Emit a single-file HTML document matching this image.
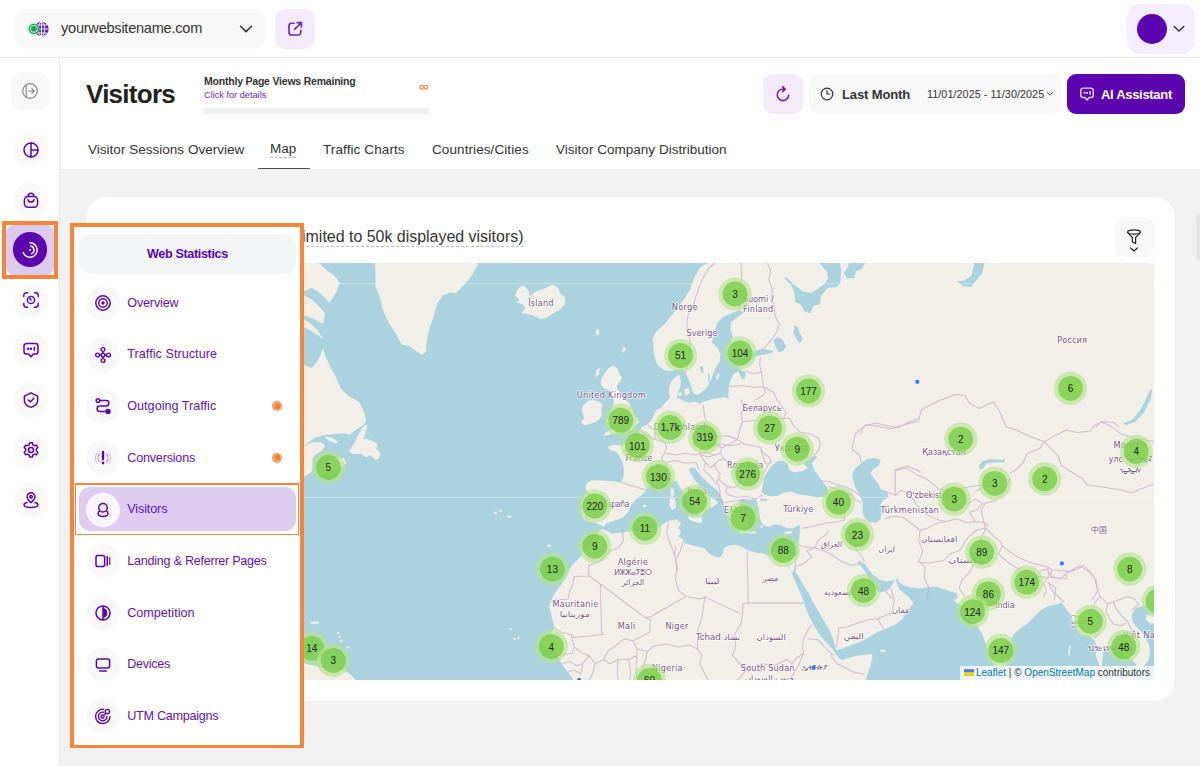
<!DOCTYPE html>
<html lang="en">
<head>
<meta charset="utf-8">
<title>Visitors - Map</title>
<style>
*{box-sizing:border-box;margin:0;padding:0}
html,body{width:1200px;height:766px;overflow:hidden;background:#fff}
body{font-family:"Liberation Sans",sans-serif;color:#222;position:relative}
.t{position:absolute;white-space:nowrap;line-height:1}
.topbar{position:absolute;left:0;top:0;width:1200px;height:58px;background:#fff;border-bottom:1px solid #e8e8e8}
.site{position:absolute;left:15px;top:9px;width:250px;height:40px;border-radius:11px;background:#f8f8f8}
.ext{position:absolute;left:275px;top:9px;width:40px;height:40px;border-radius:11px;background:#f3ebfc}
.user{position:absolute;left:1127px;top:4px;width:68px;height:50px;border-radius:13px;background:#f4eefc}
.user .av{position:absolute;left:9.6px;top:10px;width:30px;height:30px;border-radius:50%;background:#5b04b0}
.side{position:absolute;left:0;top:58px;width:60px;height:708px;background:#fff;border-right:1px solid #e8e8e8}
.sq{position:absolute;left:11px;top:14px;width:38px;height:38px;border-radius:11px;background:#f8f8f8}
.sb{position:absolute;left:13px;width:35px;height:35px;border-radius:50%;background:#f9f9f9}
.sb svg,.sq svg,.mi svg{position:absolute;left:50%;top:50%;transform:translate(-50%,-50%)}
.sel{position:absolute;left:2px;top:163.1px;width:55.9px;height:57.6px;background:#f8843a}
.sel .w{position:absolute;left:3.9px;top:3.9px;right:3.9px;bottom:3.9px;background:#fff}
.sel .in{position:absolute;left:4.4px;top:4.2px;width:47.5px;height:49.6px;border-radius:8px;background:#dccbf0}
.sel .dot{position:absolute;left:10.6px;top:11.3px;width:34.9px;height:34.9px;border-radius:50%;background:#5b04b0}
.main{position:absolute;left:60px;top:58px;width:1140px;height:708px;background:#f2f2f2}
.head{position:absolute;left:0;top:0;width:1140px;height:112px;background:#fff;border-bottom:1px solid #ebebeb}
.bar{position:absolute;left:144px;top:49.6px;width:225px;height:6.4px;background:#efefef}
.btn{position:absolute;top:16px;height:40px;border-radius:10px}
.card{position:absolute;left:26px;top:138.7px;width:1088.7px;height:504px;background:#fff;border-radius:21px;box-shadow:0 0 0 .5px #ededed}
.filt{position:absolute;left:1028.6px;top:20.5px;width:40px;height:40px;border-radius:10px;background:#f8f8f8}
.map{position:absolute;left:20px;top:66.3px;width:1048px;height:417px;overflow:hidden;background:#aad3df}
.pop{position:absolute;left:70.2px;top:223.2px;width:233.6px;height:525.1px;background:#f8843a}
.popin{position:absolute;left:3.7px;top:3.7px;right:3.7px;bottom:3.7px;background:#fff}
.pill{position:absolute;left:5.1px;top:6.9px;width:217px;height:40px;border-radius:11px;background:#f4f5f7}
.mi{position:absolute;left:12px;width:34px;height:34px;border-radius:50%;background:#f8f8f8}
.ml{position:absolute;left:53.4px;font-size:12.6px;color:#5f12b5;white-space:nowrap;line-height:1}
.act{position:absolute;left:1.2px;top:256.5px;width:224px;height:51.5px;background:#f8843a}
.act .wi{position:absolute;left:1.3px;top:1.3px;right:1.3px;bottom:1.3px;background:#fff}
.act .bg{position:absolute;left:3.9px;top:3.7px;width:217px;height:44.4px;border-radius:11px;background:#decdf0}
.od{position:absolute;left:198.6px;width:10px;height:10px;border-radius:50%;background:#f7a15e}
.od:after{content:"";position:absolute;left:2.5px;top:2.5px;width:5px;height:5px;border-radius:50%;background:#f07d28}
</style>
</head>
<body>
<div class="topbar">
  <div class="site">
    <svg style="position:absolute;left:12px;top:10px" width="24" height="20" viewBox="0 0 24 20">
      <circle cx="14.5" cy="10" r="7.2" fill="#6a1fc0"/>
      <g fill="none" stroke="#fff" stroke-width=".9"><ellipse cx="14.5" cy="10" rx="3.2" ry="7"/><path d="M7.5 10h14M9 6h11M9 14h11M14.5 3v14"/></g>
      <circle cx="6.9" cy="9.900" r="7" fill="#3ec77a" opacity=".22"/>
      <circle cx="6.9" cy="9.900" r="5.200" fill="#18a558"/>
      <circle cx="6.9" cy="9.900" r="3.500" fill="none" stroke="#fff" stroke-width=".9" opacity=".9"/>
    </svg>
    <span class="t" id="t_site" style="left:46px;top:12px;font-size:14.6px;color:#333;letter-spacing:-0.26px">yourwebsitename.com</span>
    <svg style="position:absolute;left:224px;top:15px" width="14" height="10" viewBox="0 0 14 10"><path d="M1.5 2.2L7 7.6l5.5-5.4" fill="none" stroke="#333" stroke-width="1.5" stroke-linecap="round" stroke-linejoin="round"/></svg>
  </div>
  <div class="ext">
    <svg style="position:absolute;left:12px;top:12px" width="16" height="16" viewBox="0 0 16 16" fill="none" stroke="#6a1fc0" stroke-width="1.6" stroke-linecap="round" stroke-linejoin="round"><path d="M7 2.2H4.6A2.6 2.6 0 0 0 2 4.8v6.6A2.6 2.6 0 0 0 4.6 14h6.6a2.6 2.6 0 0 0 2.6-2.6V9.2"/><path d="M10 1.6h4.4V6M14 2L7.6 8.4"/></svg>
  </div>
  <div class="user"><div class="av"></div>
    <svg style="position:absolute;left:46px;top:21px" width="12" height="8" viewBox="0 0 12 8"><path d="M1.2 1.4L6 6l4.8-4.6" fill="none" stroke="#333" stroke-width="1.4" stroke-linecap="round" stroke-linejoin="round"/></svg>
  </div>
</div>
<div class="side">
  <div class="sq"><svg width="18" height="18" viewBox="0 0 18 18" fill="none" stroke="#8a8a8a" stroke-width="1.2" stroke-linecap="round" stroke-linejoin="round"><circle cx="9" cy="9" r="7.3"/><path d="M5.2 2.8v12.4M7.6 9h5.6M10.8 6.6L13.3 9l-2.5 2.4"/></svg></div>
  <div class="sb" style="top:74px"><svg width="18" height="18" viewBox="0 0 18 18" fill="none" stroke="#5b04b0" stroke-width="1.5" stroke-linecap="round"><circle cx="9" cy="9" r="7"/><path d="M9 2v14M9 9h7"/></svg></div>
  <div class="sb" style="top:124.5px"><svg width="18" height="18" viewBox="0 0 18 18" fill="none" stroke="#5b04b0" stroke-width="1.5" stroke-linecap="round" stroke-linejoin="round"><rect x="2.400" y="5.600" width="13.200" height="10.600" rx="3.600"/><path d="M6.200 5.400V5a2.800 2.800 0 0 1 5.600 0v.4M6 8.800a3.100 3.100 0 0 0 6 0"/></svg></div>
  <div class="sel"><div class="w"></div><div class="in"></div><div class="dot"><svg style="position:absolute;left:8.500px;top:8.500px" width="18" height="18" viewBox="0 0 18 18" fill="none" stroke="#fff" stroke-width="1.5" stroke-linecap="round"><path d="M9 1.800a7.200 7.200 0 1 1-6.800 9.600"/><path d="M9.600 5a4 4 0 0 1 1 7.600"/><circle cx="9" cy="9" r="1" fill="#fff" stroke="none"/></svg></div></div>
  <div class="sb" style="top:224.500px"><svg width="18" height="18" viewBox="0 0 18 18" fill="none" stroke="#5b04b0" stroke-width="1.500" stroke-linecap="round"><path d="M1.800 5.600V4.400a2.600 2.600 0 0 1 2.600-2.600h1.200M12.400 1.800h1.200a2.600 2.600 0 0 1 2.600 2.600v1.200M16.200 12.400v1.200a2.600 2.600 0 0 1-2.600 2.600h-1.200M5.600 16.200H4.400a2.600 2.600 0 0 1-2.600-2.600v-1.200"/><circle cx="9" cy="9" r="3.600"/><path d="M9 9L7.800 7.600"/></svg></div>
  <div class="sb" style="top:274px"><svg width="18" height="18" viewBox="0 0 18 18" fill="none" stroke="#5b04b0" stroke-width="1.500" stroke-linecap="round" stroke-linejoin="round"><path d="M4.600 2.400h8.800a2.600 2.600 0 0 1 2.600 2.600v5.400a2.600 2.600 0 0 1-2.600 2.600h-2l-2.400 2.800L6.600 13h-2a2.600 2.600 0 0 1-2.600-2.600V5a2.600 2.600 0 0 1 2.600-2.600z"/><path d="M12.400 6.200v3" /><circle cx="6.200" cy="7.700" r=".5" fill="#5b04b0"/><circle cx="9" cy="7.700" r=".5" fill="#5b04b0"/></svg></div>
  <div class="sb" style="top:324.500px"><svg width="18" height="18" viewBox="0 0 18 18" fill="none" stroke="#5b04b0" stroke-width="1.500" stroke-linecap="round" stroke-linejoin="round"><path d="M9 1.800l6.600 3.400v4.200c0 3.200-2.600 5.600-6.600 7-4-1.400-6.600-3.800-6.600-7V5.200z" transform="rotate(0 9 9)"/><path d="M6.400 9l1.900 1.900 3.500-3.600"/></svg></div>
  <div class="sb" style="top:374.500px"><svg width="18" height="18" viewBox="0 0 18 18" fill="none" stroke="#5b04b0" stroke-width="1.500" stroke-linejoin="round"><circle cx="9" cy="9" r="2.500"/><path d="M7.600 1.800h2.800l.5 2 1.500.9 2-.6 1.400 2.400-1.500 1.500v1.800l1.500 1.500-1.400 2.400-2-.6-1.500.9-.5 2H7.600l-.5-2-1.500-.9-2 .6-1.400-2.400 1.500-1.500V8l-1.500-1.500 1.400-2.400 2 .6 1.500-.9z"/></svg></div>
  <div class="sb" style="top:424.500px"><svg width="18" height="18" viewBox="0 0 18 18" fill="none" stroke="#5b04b0" stroke-width="1.500" stroke-linecap="round" stroke-linejoin="round"><path d="M9 11.800c2.600-2.400 3.900-4.300 3.900-6A3.900 3.900 0 0 0 9 1.800a3.900 3.900 0 0 0-3.900 4c0 1.700 1.300 3.600 3.900 6z"/><circle cx="9" cy="5.800" r="1.300"/><path d="M5 11.600c-1.900.5-3 1.300-3 2.200 0 1.500 3.100 2.600 7 2.600s7-1.100 7-2.600c0-.9-1.100-1.700-3-2.200"/></svg></div>
</div>
<div class="main">
  <div class="head">
    <span class="t" id="t_h1" style="left:26px;top:22.8px;font-size:26px;font-weight:700;color:#222;letter-spacing:-0.74px">Visitors</span>
    <span class="t" id="t_mpv" style="left:144px;top:17.6px;font-size:10.5px;font-weight:700;color:#333;letter-spacing:-0.21px">Monthly Page Views Remaining</span>
    <span class="t" id="t_cfd" style="left:144px;top:32.6px;font-size:9.2px;color:#6a1fc0">Click for details</span>
    <span class="t" style="left:359px;top:22.4px;font-size:13.5px;font-weight:700;color:#f08a3c">∞</span>
    <div class="bar"></div>
    <div class="btn" style="left:703px;width:40px;background:#f3ebfc"><svg style="position:absolute;left:11px;top:11px" width="18" height="18" viewBox="0 0 18 18" fill="none" stroke="#6a1fc0" stroke-width="1.600" stroke-linecap="round" stroke-linejoin="round"><path d="M14.600 10.200A5.700 5.700 0 1 1 9 4.200h1.600"/><path d="M8.600 1.600l2.600 2.600-2.600 2.600" fill="#6a1fc0"/></svg></div>
    <div class="btn" style="left:749px;width:252px;background:#f8f8f8">
      <svg style="position:absolute;left:11px;top:13px" width="14" height="14" viewBox="0 0 14 14" fill="none" stroke="#333" stroke-width="1.200" stroke-linecap="round" stroke-linejoin="round"><circle cx="7" cy="7" r="5.800"/><path d="M7 3.600V7h2.600"/></svg>
      <span class="t" id="t_lm" style="left:33px;top:13.500px;font-size:13px;font-weight:700;color:#333;letter-spacing:-0.13px">Last Month</span>
      <span class="t" id="t_date" style="left:118px;top:15px;font-size:10.800px;color:#333;letter-spacing:0.05px">11/01/2025 - 11/30/2025</span>
      <svg style="position:absolute;left:237px;top:17px" width="8" height="6" viewBox="0 0 8 6"><path d="M1 1.200l3 3 3-3" fill="none" stroke="#444" stroke-width="1" stroke-linecap="round" stroke-linejoin="round"/></svg>
    </div>
    <div class="btn" style="left:1007px;width:118px;background:#5b04b0;border-radius:9px">
      <svg style="position:absolute;left:12px;top:12px" width="16" height="16" viewBox="0 0 18 18" fill="none" stroke="#e9d9fb" stroke-width="1.600" stroke-linecap="round" stroke-linejoin="round"><path d="M4.600 2.400h8.800a2.600 2.600 0 0 1 2.600 2.600v5.400a2.600 2.600 0 0 1-2.600 2.600h-2l-2.400 2.800L6.600 13h-2a2.600 2.600 0 0 1-2.600-2.600V5a2.600 2.600 0 0 1 2.600-2.600z"/><path d="M12.400 6.200v3"/><circle cx="6.200" cy="7.700" r=".5" fill="#e9d9fb"/><circle cx="9" cy="7.700" r=".5" fill="#e9d9fb"/></svg>
      <span class="t" id="t_ai" style="left:34px;top:13.500px;font-size:13px;font-weight:700;color:#fff;letter-spacing:-0.31px">AI Assistant</span>
    </div>
    <span class="t" id="t_tab1" style="left:28px;top:84.6px;font-size:13.55px;color:#333;letter-spacing:0">Visitor Sessions Overview</span>
    <span class="t" id="t_tab2" style="left:210px;top:83.6px;font-size:13.55px;color:#333;padding-bottom:2px;border-bottom:1px dashed #bbb;letter-spacing:0">Map</span>
    <div style="position:absolute;left:198px;top:110.3px;width:52px;height:1.2px;background:#4a4a4a"></div>
    <span class="t" id="t_tab3" style="left:263px;top:84.6px;font-size:13.55px;color:#333;letter-spacing:0.08px">Traffic Charts</span>
    <span class="t" id="t_tab4" style="left:372px;top:84.6px;font-size:13.55px;color:#333;letter-spacing:0.07px">Countries/Cities</span>
    <span class="t" id="t_tab5" style="left:496px;top:84.6px;font-size:13.55px;color:#333;letter-spacing:0">Visitor Company Distribution</span>
  </div>
  <div class="card">
    <span class="t" id="t_ct" style="right:651.2px;top:32px;font-size:15.95px;color:#333;padding-bottom:1.8px;border-bottom:1px dashed #bbb">Visitors Map (limited to 50k displayed visitors)</span>
    <div class="filt"><svg style="position:absolute;left:10.2px;top:9.4px" width="18" height="26" viewBox="0 0 18 26" fill="none" stroke="#222" stroke-width="1.200" stroke-linecap="round" stroke-linejoin="round"><ellipse cx="9" cy="5" rx="6.400" ry="2.200"/><path d="M2.600 5.400L7.400 10.600V15l3.200 1.400V10.600l4.800-5.200"/><path d="M5.600 21l3.400 3 3.400-3"/></svg></div>
    <div class="map"><svg width="1048" height="417" viewBox="106 263 1048 417" style="position:absolute;left:0;top:0;display:block">
<rect x="106" y="263" width="1048" height="417" fill="#aad3df"/>
<path fill="#f2efe9" stroke="#f2efe9" stroke-width=".6" stroke-linejoin="round" d="M375.2,261.8 376.1,287.5 380.7,298.5 383.4,310.4 388.0,320.5 395.3,332.4 401.8,344.3 410.0,346.2 417.3,351.7 421.9,354.4 425.6,351.7 426.5,340.7 429.3,327.8 433.8,315.0 436.6,304.0 442.1,295.8 450.3,292.1 455.8,293.0 461.3,287.5 469.6,278.3 476.9,265.5 478.8,261.8Z M245.0,261.8 317.4,261.8 323.8,268.3 333.9,275.6 339.4,282.4 335.8,293.0 329.3,302.5 324.8,297.6 318.3,291.2 311.9,287.5 306.4,290.3 245.0,293.0Z M245.0,295.8 304.0,295.8 311.0,299.4 318.3,305.8 324.8,313.2 322.9,323.3 320.2,322.3 312.8,318.3 304.0,315.0 245.0,315.0Z M245.0,319.6 304.0,319.6 311.0,324.2 317.4,330.6 322.0,337.9 318.3,335.2 311.0,330.6 304.0,326.9 245.0,326.9Z M245.0,365.4 304.0,365.4 311.9,368.2 319.3,359.0 322.9,348.9 325.7,357.2 330.3,367.3 336.7,379.2 340.3,388.3 347.7,395.7 355.0,400.1 358.7,401.8 363.3,411.0 366.0,420.2 363.3,424.8 355.0,430.3 349.5,434.8 344.0,433.0 333.0,433.9 323.8,434.8 314.7,437.6 307.3,443.1 304.0,445.8 245.0,445.8Z M365.1,424.8 360.5,431.2 355.0,442.2 349.5,451.3 353.2,454.1 360.5,453.2 366.0,456.8 370.6,455.0 375.2,459.6 378.8,458.7 379.8,453.2 376.1,448.6 377.0,444.0 372.4,441.3 367.8,439.4 363.3,439.4 366.0,430.3 366.9,425.7Z M324.8,436.7 331.2,437.6 337.6,441.8 335.8,443.1 329.3,440.7Z M245.0,446.8 304.0,446.8 311.0,443.1 320.2,442.2 324.8,445.5 322.0,450.4 315.6,454.1 311.9,458.7 312.8,466.0 311.0,472.4 304.0,476.1 245.0,476.1Z M327.5,460.5 336.7,457.8 344.0,458.7 345.8,463.3 343.1,466.0 334.8,469.7 325.7,473.3 322.0,472.4 327.5,466.0Z M241.2,661.5 304.3,663.4 319.6,667.3 345.1,671.3 350.9,675.2 356.8,681.1 241.2,681.1Z M311.4,621.9 318.6,621.9 318.6,623.8 311.4,623.8Z M520.0,287.5 523.7,285.7 528.3,290.3 529.2,296.7 531.0,295.8 536.5,291.2 543.8,289.3 552.1,284.8 557.6,287.5 559.4,293.0 564.9,297.6 564.9,304.0 559.4,309.5 553.0,313.2 545.7,317.8 540.2,318.7 532.8,315.0 525.5,313.2 521.8,313.2 525.5,308.6 522.8,304.0 517.2,302.2 520.0,299.4 515.4,295.8 517.2,290.3Z M596.1,330.6 598.8,329.7 598.5,335.2 596.1,334.3Z M613.8,365.9 617.4,368.7 618.8,373.8 621.7,377.3 619.6,381.7 616.0,386.0 617.4,389.6 622.4,395.3 625.3,400.3 628.9,403.2 631.0,407.5 633.2,411.8 634.6,416.1 637.5,418.3 638.2,422.6 635.4,426.2 631.8,429.8 624.6,431.9 617.4,432.6 611.7,433.4 603.8,435.9 605.9,432.6 611.7,429.8 613.1,426.2 608.8,424.7 606.6,420.4 609.5,416.1 611.7,411.8 613.1,407.5 614.5,401.8 613.1,397.5 608.8,389.6 605.9,388.8 603.0,387.4 600.9,383.1 602.3,377.3 605.2,373.0 608.8,368.0Z M583.6,405.4 588.7,401.0 593.7,400.3 598.7,401.8 602.3,404.6 600.9,410.4 601.6,414.7 599.4,419.0 595.1,421.9 588.7,424.0 583.6,424.7 581.5,421.9 584.4,418.3 582.9,413.2 582.2,408.9Z M596.6,370.9 599.4,368.0 598.7,374.5 595.9,377.3Z M623.9,346.5 625.6,349.3 623.4,352.6 622.4,350.1Z M684.9,389.6 688.5,388.1 689.5,393.1 685.2,395.7Z M678.4,392.9 681.3,392.4 680.9,396.0 678.4,395.7Z M718.2,373.3 719.4,375.2 717.2,379.9 716.2,377.6Z M671.4,488.4 673.6,489.2 673.6,496.0 671.6,496.8 670.5,492.6Z M670.2,498.5 674.8,497.7 675.6,507.9 672.2,509.6 669.7,506.2Z M688.4,516.3 699.4,517.2 701.9,519.7 700.2,523.1 694.3,521.4 689.2,518.9Z M643.2,504.9 646.1,505.2 645.8,507.1 643.2,506.7Z M784.2,532.5 791.8,531.3 791.3,533.3 785.2,533.8Z M739.3,531.6 755.4,531.6 755.4,533.3 739.3,533.3Z M760.5,525.9 762.5,525.9 762.5,527.2 760.5,527.2Z M709.8,261.8 700.6,267.3 695.1,276.5 690.5,289.3 685.0,298.5 679.5,305.8 672.2,315.0 664.8,324.2 656.6,331.5 652.9,338.8 653.8,348.0 654.8,357.2 657.5,364.5 664.8,370.0 672.2,370.6 679.5,369.1 683.5,368.7 684.9,370.9 687.8,377.3 690.6,383.1 692.1,388.8 693.5,393.1 697.8,394.6 702.1,391.7 706.4,387.4 710.0,381.7 712.2,375.9 715.1,368.7 719.4,361.5 720.1,354.4 717.9,348.6 713.6,344.3 711.9,342.5 713.8,333.3 717.4,322.3 722.9,316.8 731.2,313.2 739.4,309.9 744.9,312.3 737.6,317.2 731.2,322.3 730.8,329.7 733.4,337.0 730.3,343.4 727.5,349.8 729.3,357.2 736.7,359.9 747.7,355.3 755.0,350.8 762.3,348.6 772.4,350.2 773.7,352.0 769.7,353.9 761.4,355.3 755.0,357.2 752.3,359.9 744.0,365.4 736.7,367.3 741.3,370.0 745.8,371.8 745.5,377.3 742.5,380.1 740.3,376.4 738.5,371.8 733.9,373.7 731.2,379.2 729.3,386.5 728.4,393.8 729.3,400.1 730.0,400.3 725.1,397.5 719.4,398.2 713.6,398.9 706.4,401.0 699.3,403.9 695.0,401.8 689.2,403.2 682.0,400.3 676.3,397.5 677.7,391.7 679.9,387.4 680.6,381.7 679.2,375.2 677.0,375.9 674.8,378.1 672.0,380.9 669.8,386.0 669.1,393.1 670.5,398.2 664.8,403.2 661.9,407.5 656.2,410.4 654.0,414.7 651.9,419.7 647.6,424.7 641.8,427.6 637.3,434.8 630.0,436.7 627.3,439.4 622.7,445.8 613.5,444.9 608.0,446.8 609.8,449.5 617.2,452.3 619.9,456.8 622.7,462.3 624.5,469.7 623.6,477.0 621.8,482.5 611.7,481.6 600.7,480.7 591.5,480.7 586.9,483.4 586.0,488.0 587.8,492.6 584.2,497.2 582.3,502.7 581.4,510.0 582.3,517.3 586.0,521.0 593.3,521.9 600.7,524.7 604.3,526.5 606.2,522.8 613.5,521.0 622.7,517.3 628.2,511.8 630.0,506.3 633.7,500.8 641.0,495.3 646.5,489.8 648.3,486.2 652.0,485.3 659.3,486.2 666.7,485.3 672.2,481.6 676.5,480.7 679.9,486.7 683.3,491.7 686.7,496.8 690.9,502.8 695.1,507.9 698.5,513.0 700.2,517.2 701.9,520.6 701.1,523.1 699.0,521.8 701.4,517.2 703.1,513.0 705.3,509.9 707.9,508.2 712.1,507.0 715.5,504.5 717.7,503.1 715.5,500.2 712.1,498.5 707.9,495.1 702.8,490.1 698.5,485.0 694.3,479.9 690.9,473.9 688.4,469.7 690.1,468.0 693.4,467.1 696.0,468.0 697.3,471.4 698.5,472.2 701.9,476.5 707.0,481.6 713.0,486.7 718.0,490.9 721.4,496.0 723.1,501.1 724.0,505.3 724.8,507.9 726.5,511.3 729.1,516.3 731.6,521.4 734.2,525.7 737.6,529.1 741.8,530.8 745.2,528.2 748.6,524.8 746.9,519.7 744.3,514.7 741.8,509.6 740.1,504.5 738.4,500.2 743.5,498.5 750.3,499.4 753.7,498.5 757.1,500.2 757.1,501.9 758.8,507.9 759.6,514.7 761.3,521.4 763.0,524.8 768.9,526.5 775.7,524.0 780.8,524.8 785.9,527.4 792.7,528.2 798.6,524.8 800.3,526.5 800.3,531.6 799.5,538.4 798.6,545.2 798.4,553.0 796.3,557.2 791.0,556.1 784.8,553.4 780.6,549.8 774.3,550.9 769.1,558.2 768.9,555.7 762.2,553.7 755.4,552.8 748.6,551.1 741.8,546.9 735.0,545.2 728.2,546.0 724.0,548.6 723.1,553.7 719.7,557.9 713.0,556.2 707.9,552.8 704.5,548.6 697.7,546.9 690.9,545.2 684.1,543.5 683.3,540.1 678.2,536.7 680.7,532.5 678.2,528.2 680.7,523.1 676.5,519.7 668.0,521.4 659.3,526.5 652.0,528.3 637.3,531.1 630.0,531.1 622.7,532.9 611.7,533.8 606.2,531.1 601.6,529.3 597.3,534.2 591.0,542.5 582.7,553.0 580.6,557.2 572.2,565.5 566.0,576.0 561.8,584.3 555.5,592.7 551.3,601.0 549.3,607.3 551.3,613.6 553.4,621.9 554.5,628.2 549.3,636.6 541.9,642.8 547.2,649.1 557.6,655.4 561.8,663.7 568.1,672.1 575.4,682.5 865.0,682.4 867.1,674.1 870.2,665.7 871.9,658.4 872.3,655.3 871.3,654.2 864.0,655.3 855.6,656.3 847.3,658.4 842.0,660.5 838.9,658.4 834.7,653.2 833.7,651.1 829.5,645.9 824.3,640.7 819.1,634.4 814.9,628.1 811.8,621.9 808.6,615.6 805.5,608.3 803.4,601.0 800.3,593.7 797.1,586.4 794.0,579.1 790.9,571.8 787.7,565.5 786.7,563.0 788.4,562.6 789.8,567.6 791.9,572.8 793.6,570.7 795.3,564.5 796.5,564.7 795.5,571.8 799.2,577.0 803.4,584.3 808.6,592.6 812.8,601.0 817.0,608.3 821.2,615.6 825.3,622.9 829.5,629.2 832.6,636.5 834.7,643.8 836.4,650.1 843.1,648.0 851.4,644.8 859.8,641.7 868.1,637.5 876.5,632.3 883.8,629.2 891.1,626.1 897.4,622.9 902.6,618.7 905.7,612.5 912.0,605.2 913.0,602.0 907.8,596.8 902.6,592.6 898.4,588.5 896.3,582.2 895.3,578.0 893.2,583.2 890.1,588.5 885.9,591.6 880.7,592.6 876.5,590.6 874.0,586.4 871.9,587.4 868.1,578.0 865.0,571.8 861.9,567.6 858.7,564.5 856.7,561.3 859.8,560.9 865.0,563.4 868.1,568.6 872.3,573.9 878.6,579.1 885.9,581.2 893.2,580.1 897.4,578.0 899.5,582.2 903.6,585.3 912.0,587.4 920.3,588.0 928.7,586.8 937.0,586.4 947.7,590.3 956.3,592.5 958.5,597.9 954.2,600.1 957.4,603.3 962.8,606.6 960.7,612.0 965.0,617.4 973.7,622.8 978.0,627.2 982.3,633.7 985.6,642.3 988.8,651.0 993.2,661.8 997.5,672.7 1000.1,683.5 1005.1,683.5 1006.2,665.5 1008.3,651.0 1012.7,634.8 1019.2,629.3 1027.8,622.8 1034.3,616.3 1040.8,609.8 1049.5,605.5 1056.0,604.4 1061.4,602.3 1064.7,606.6 1067.9,610.9 1071.2,614.2 1073.3,620.7 1075.5,627.2 1079.8,633.7 1088.5,635.8 1095.0,640.2 1097.2,646.7 1096.1,655.3 1098.3,661.8 1100.4,668.3 1101.5,683.5 1101.3,669.7 1102.2,658.7 1103.1,651.4 1106.7,645.9 1113.1,645.0 1118.6,649.6 1125.9,655.1 1131.4,659.7 1135.1,662.4 1138.7,669.7 1142.4,669.7 1144.2,665.1 1147.9,660.6 1149.7,653.3 1148.8,645.9 1146.1,638.6 1142.4,633.1 1136.9,627.7 1132.3,622.2 1131.4,614.9 1135.1,607.9 1142.4,605.7 1149.7,606.6 1157.0,607.9 1160.0,610.0 1160.0,255.0 706.0,255.0Z M1147.0,614.9 1157.0,613.9 1157.0,623.1 1149.7,623.1 1146.1,619.4Z M880.3,649.9 885.3,649.9 885.3,651.5 880.3,651.5Z M1069.2,646.2 1070.3,646.2 1069.2,655.3 1068.4,655.3Z M547.6,545.0 550.5,545.0 550.5,546.5 547.6,546.5Z M494.0,512.2 496.5,511.8 496.5,513.3 494.0,513.5Z M499.8,510.4 501.7,510.2 501.7,511.5 499.8,511.5Z M507.5,515.9 510.8,515.9 510.8,517.3 507.5,517.3Z M337.4,632.3 339.0,632.3 339.0,633.8 337.4,633.8Z M338.4,636.2 340.0,636.2 340.0,637.8 338.4,637.8Z M340.4,640.1 341.9,640.1 341.9,641.7 340.4,641.7Z M347.2,646.6 348.8,646.6 348.8,648.1 347.2,648.1Z M509.8,628.4 511.4,628.4 511.4,629.9 509.8,629.9Z M513.7,638.1 515.3,638.1 515.3,639.7 513.7,639.7Z M517.7,637.2 519.2,637.2 519.2,638.7 517.7,638.7Z"/>
<path fill="#aad3df" d="M762.3,488.0 764.2,477.0 770.6,466.9 777.0,461.4 783.4,460.5 787.6,464.2 788.9,469.7 794.4,472.4 802.7,471.1 808.2,467.8 802.7,463.3 808.2,459.6 814.6,455.6 817.3,456.8 811.8,463.3 814.6,470.6 821.9,480.7 827.4,488.0 828.3,493.5 825.6,496.8 817.3,497.2 806.3,495.3 798.1,494.4 791.7,491.7 783.4,492.6 777.9,495.7 771.5,496.6 765.1,495.0 761.4,491.7Z M760.1,498.6 766.9,499.0 767.3,500.8 760.5,500.8Z M861.3,463.3 866.8,459.6 874.2,457.8 880.6,459.6 878.8,466.0 873.3,468.8 870.5,473.3 874.2,478.8 878.8,484.3 880.6,489.8 887.0,491.7 888.8,497.2 883.3,499.9 880.6,504.5 881.5,511.8 880.6,519.2 876.0,522.8 868.7,521.9 864.1,517.3 862.3,510.0 863.2,502.7 859.5,495.3 855.8,488.0 853.1,480.7 852.2,473.3 855.8,467.8Z M817.3,260.9 839.3,260.9 841.2,271.0 840.3,283.8 835.7,287.5 828.3,287.5 821.0,295.8 820.1,304.0 813.7,305.8 810.0,313.2 804.5,311.3 799.9,304.0 795.3,302.2 794.4,293.0 791.7,285.7 784.3,278.3 786.2,277.4 795.3,285.7 802.7,291.2 810.0,293.0 817.3,289.3 824.7,283.8 828.3,278.3 826.5,271.0Z M850.3,260.9 866.8,260.9 861.3,269.2 855.8,271.0 854.0,278.3 846.7,278.3 843.9,272.8 846.7,269.2Z M773.3,340.7 777.0,337.0 782.5,339.8 786.2,346.2 783.4,350.8 778.8,352.6 776.1,348.0Z M794.4,325.1 798.1,327.8 799.9,333.3 802.7,338.8 799.9,343.4 796.3,338.8 793.5,333.3Z M700.0,365.9 702.9,366.6 703.6,372.3 701.0,373.0Z M707.9,373.3 709.3,373.8 710.0,382.4 708.6,381.7Z M974.8,261.1 984.9,261.1 982.3,273.0 973.7,283.8 971.5,287.1 962.8,286.0 956.8,281.2 965.0,280.6 971.5,275.2Z M1152.4,390.0 1150.3,399.8 1143.8,412.8 1135.1,422.1 1126.4,425.1 1123.2,423.6 1132.9,419.3 1140.5,409.5 1147.0,396.5 1150.3,389.6Z M979.1,465.5 982.3,461.2 991.0,459.0 1001.8,460.1 1005.1,459.0 1004.0,462.3 995.3,462.3 986.7,463.3 982.3,468.8 980.2,469.8Z"/>
<path fill="none" stroke="#c4a6c8" stroke-width="1.05" stroke-linejoin="round" stroke-linecap="round" opacity=".68" d="M714.3,263.3 708.8,268.3 703.3,277.4 698.8,287.5 695.6,297.6 693.3,305.8 688.3,314.1 686.8,322.3 687.8,333.3 690.5,341.6 689.6,348.0 687.8,362.7 685.9,372.8 M740.7,261.8 741.8,271.0 741.4,280.2 739.4,293.0 739.4,309.5 M766.9,261.8 770.6,271.0 768.8,280.2 772.4,289.3 771.5,296.7 774.3,307.7 775.2,316.8 779.2,324.2 776.1,333.3 770.6,340.7 764.2,348.0 761.4,350.8 M760.5,357.2 759.6,364.5 761.4,371.8 762.3,379.2 763.3,386.5 773.3,392.0 777.0,400.1 M745.8,370.9 753.2,373.7 761.4,372.2 M730.3,386.5 742.2,385.6 755.0,387.4 763.3,386.5 M763.3,386.5 766.0,392.0 762.3,395.7 755.0,400.1 M741.3,400.0 743.1,407.3 741.3,414.7 742.2,422.0 747.7,421.1 760.5,420.2 773.3,419.3 783.4,418.3 786.2,412.8 782.5,407.3 777.0,400.0 M783.4,418.3 789.8,418.3 793.5,425.7 799.9,432.1 810.0,433.9 819.2,438.5 820.1,445.8 817.3,452.3 814.0,455.4 M742.2,422.0 739.4,431.2 737.6,439.4 744.0,444.0 753.2,445.8 760.5,447.3 763.3,453.2 768.8,456.8 771.5,461.4 768.2,464.5 766.0,468.8 764.2,472.4 M760.5,447.3 762.3,455.0 765.1,462.3 768.2,464.5 M737.6,439.4 729.3,444.0 722.0,447.7 720.2,453.2 723.8,458.7 729.3,463.3 731.2,467.8 736.7,471.5 747.7,475.2 756.8,473.3 764.2,472.4 M722.0,447.7 714.7,444.0 707.3,445.8 701.8,449.5 700.0,452.3 M700.0,455.0 709.2,456.8 720.2,453.2 M737.6,439.4 727.5,435.8 718.3,436.7 711.0,434.8 703.7,436.7 700.0,433.9 M723.8,458.7 718.3,460.5 714.7,464.2 716.5,469.7 720.2,473.3 718.3,478.8 722.0,482.5 727.5,486.2 725.7,491.7 729.3,495.3 736.7,497.2 745.8,496.3 755.0,499.0 762.3,495.3 M700.0,455.0 705.5,462.3 711.0,467.8 714.7,464.2 M705.5,462.3 703.7,469.7 711.0,477.0 716.5,484.3 718.3,478.8 M718.3,484.3 720.2,491.7 719.3,499.0 722.9,502.7 729.3,501.8 736.7,500.8 744.0,499.9 M727.5,486.2 732.1,488.0 736.7,486.2 739.4,480.7 736.7,471.5 M821.0,480.7 828.3,481.6 837.5,484.7 846.7,487.1 854.9,491.7 859.5,495.3 M828.3,486.5 835.7,488.9 844.8,491.7 848.5,499.9 844.8,506.3 843.9,517.3 844.8,520.1 M844.8,491.7 852.2,495.3 855.8,499.9 861.3,502.7 M802.7,528.3 811.8,526.5 824.7,523.2 835.7,521.9 844.8,520.1 M861.3,462.3 859.5,455.0 852.2,449.5 853.1,443.1 855.8,433.0 865.0,425.7 876.0,422.9 887.0,425.7 898.0,427.5 909.0,422.0 920.0,418.3 M880.6,489.8 895.3,495.3 895.3,469.7 907.2,466.0 920.0,471.5 M621.8,482.5 630.0,485.3 639.2,488.0 646.5,489.8 M641.0,431.2 648.3,436.7 655.7,439.4 664.8,442.2 666.7,447.7 664.8,453.2 661.2,458.7 664.8,462.3 666.7,469.7 664.8,477.0 672.2,480.7 M648.3,425.7 655.7,431.2 654.8,439.4 M666.7,453.2 675.8,455.0 685.0,453.2 696.0,455.0 705.2,452.3 714.3,455.0 M666.7,462.3 675.8,460.5 685.0,463.3 696.0,462.3 698.8,469.3 M703.3,405.5 704.3,414.7 707.0,425.7 M586.9,492.6 590.6,495.3 588.8,502.7 589.7,510.0 586.0,517.3 586.9,521.0 M705.2,452.3 710.7,445.8 719.8,444.0 729.0,445.8 740.0,444.0 M622.4,529.0 623.4,540.4 618.2,547.8 609.8,550.9 599.4,561.3 589.0,565.5 588.5,575.5 603.6,586.4 620.3,599.0 637.0,611.5 645.4,617.8 650.6,616.7 670.4,605.2 686.1,596.4 678.8,590.6 675.7,580.1 676.7,567.6 674.6,555.1 675.7,546.7 M588.5,576.0 573.9,576.4 573.3,583.3 569.1,592.7 568.1,599.0 554.5,600.0 551.3,602.1 M600.4,584.7 600.4,588.5 601.5,632.4 603.6,634.5 574.3,637.6 571.2,634.5 M686.1,596.4 699.7,599.0 704.9,596.9 740.0,613.6 M645.4,617.8 650.6,619.8 649.5,632.4 641.2,636.6 632.8,640.7 624.5,638.7 614.0,647.0 607.8,651.2 603.6,659.5 595.2,663.7 589.0,655.4 582.7,653.3 574.3,647.0 571.2,634.5 561.8,632.4 554.5,628.2 M557.6,655.4 572.2,653.3 574.3,647.0 M704.9,596.9 701.8,617.8 697.6,630.3 697.6,649.1 689.2,644.9 678.8,647.0 666.3,643.9 653.7,646.0 647.5,651.2 637.0,649.1 632.8,640.7 M697.6,649.1 701.8,655.4 699.7,663.7 703.9,672.1 708.0,680.4 M647.5,651.2 645.4,659.5 643.3,667.9 645.4,680.4 M603.6,659.5 609.8,663.7 618.2,659.5 628.7,659.5 637.0,655.4 637.0,649.1 M618.2,659.5 617.2,672.1 618.2,680.4 M628.7,659.5 630.7,672.1 629.7,680.4 M637.0,655.4 636.0,667.9 637.0,680.4 M595.2,663.7 593.1,672.1 589.0,680.4 M561.8,663.7 570.1,661.6 576.4,665.8 582.7,663.7 589.0,655.4 M568.1,672.1 574.3,670.0 580.6,674.2 582.7,663.7 M668.5,521.8 666.8,531.6 668.8,540.1 672.2,548.6 675.6,558.8 677.7,570.0 M683.3,541.0 680.7,550.3 676.5,558.8 M747.2,551.9 748.2,603.1 803.6,603.1 M748.2,603.1 743.0,603.5 742.6,614.0 740.9,624.0 734.6,634.5 735.7,647.0 732.5,655.4 739.8,663.7 747.2,667.9 761.8,663.7 774.3,665.8 786.9,659.5 792.1,663.7 797.3,657.5 803.6,653.3 M747.2,667.9 743.0,674.2 736.7,680.4 M811.9,625.1 807.8,630.3 803.6,638.7 802.5,647.0 803.6,653.3 799.4,663.7 793.1,674.2 789.0,680.4 M807.8,638.7 818.2,639.7 824.5,647.0 830.7,653.3 833.9,655.4 M830.7,655.4 837.0,663.7 853.7,672.1 864.2,674.2 M796.3,557.2 794.8,570.1 M797.7,565.9 803.6,563.4 811.9,557.2 806.7,550.9 815.1,547.8 828.7,553.0 841.2,561.3 851.6,565.5 858.9,563.8 M799.4,544.6 802.5,546.7 815.1,547.8 818.2,540.4 826.6,534.2 828.7,530.0 M843.3,527.9 853.7,538.4 855.8,548.8 862.1,557.2 864.2,561.3 M836.4,646.9 838.9,628.1 847.3,627.1 857.7,622.9 868.1,619.8 877.5,618.7 883.8,629.2 M877.5,618.7 892.2,612.5 894.2,600.0 891.1,589.5 M885.9,591.6 892.2,598.9 M920.1,530.5 918.7,541.0 922.7,551.4 918.7,561.9 925.3,567.1 924.0,577.5 929.2,588.0 926.6,600.0 M918.7,561.9 927.9,563.2 943.6,560.6 950.1,554.0 960.5,550.1 964.4,542.3 969.7,535.8 976.2,530.5 985.3,527.9 M946.2,521.4 956.6,518.8 967.0,522.7 974.9,521.4 985.3,522.7 987.9,526.6 M884.8,518.8 893.9,516.2 903.1,517.5 912.2,524.0 920.1,530.5 927.9,527.9 938.3,522.7 946.2,521.4 M895.2,495.3 901.8,490.1 909.6,494.0 916.1,504.4 927.9,514.9 938.3,520.1 946.2,521.4 M895.2,495.3 895.2,470.5 907.0,467.9 916.1,474.4 925.3,478.3 935.7,486.2 940.9,490.1 954.0,490.1 972.3,486.2 982.7,484.9 M974.9,491.4 985.3,486.2 1006.2,487.5 1010.1,478.3 M967.0,504.4 974.9,499.2 982.7,503.1 977.5,509.7 969.7,512.3 974.9,521.4 M985.3,527.9 982.7,517.5 981.4,509.7 985.3,503.1 995.8,500.5 1006.2,490.1 M918.7,420.9 904.4,424.8 891.3,428.7 875.7,426.1 865.2,424.8 860.0,433.9 M1006.2,426.9 1016.7,430.0 1027.1,435.2 1037.5,439.2 1044.1,441.8 1040.2,448.3 1027.1,453.5 1023.2,462.7 1016.7,469.2 1010.1,473.1 M1044.1,441.8 1053.2,436.6 1066.3,430.0 1076.7,432.6 1089.8,431.3 1095.0,424.8 1101.5,422.2 1110.7,426.1 1121.1,433.9 1134.2,437.9 1155.0,441.8 M1044.1,441.8 1049.3,447.0 1058.4,456.1 1061.0,465.3 1068.9,470.5 1081.9,478.3 1087.2,484.9 1105.4,487.5 1121.1,490.1 1131.5,492.7 1144.6,487.5 1155.0,483.6 M985.3,527.9 993.2,535.8 1001.0,542.3 1002.3,546.2 998.4,554.0 1008.8,563.2 1021.9,571.0 1037.5,576.2 1048.5,577.5 1048.0,567.1 1051.9,569.7 1066.3,571.0 1068.9,572.3 1081.9,567.1 1089.8,572.3 1096.3,580.2 1097.6,590.6 1092.4,600.0 M985.3,529.2 980.1,541.0 974.9,561.9 969.7,572.3 961.8,580.2 959.2,588.0 964.4,595.8 M1002.3,546.2 1016.7,556.7 1032.3,563.2 1048.0,567.1 M1051.9,569.7 1050.6,577.5 1066.3,578.9 1066.3,571.0 M1048.0,582.8 1055.8,588.0 1054.5,600.0 M1040.0,571.0 1047.3,569.1 1051.0,576.5 1060.1,578.3 1067.4,572.8 1076.6,567.3 1083.9,565.5 1089.4,571.0 1094.9,578.3 1096.7,587.4 1100.3,596.6 1107.7,603.9 1113.1,602.1 M1113.1,602.1 1120.5,599.3 1127.8,596.6 1135.1,599.3 1138.7,604.8 1132.3,609.4 M1113.1,602.1 1116.8,609.4 1122.3,616.7 1127.8,622.2 1131.4,629.5 1135.1,633.1 M1107.7,603.9 1105.8,611.2 1109.5,618.5 1113.1,624.0 1120.5,625.8 1125.9,623.1 M1100.3,596.6 1094.9,602.1 1093.0,609.4 1096.7,614.9 1102.2,620.3 1100.3,629.5 1094.9,638.6 M1048.2,581.9 1051.0,589.3 1058.3,596.6 1063.8,602.1 M1047.3,578.3 1043.7,583.8 1046.4,591.1 1043.7,596.6 M918.4,420.3 921.7,409.5 939.0,400.8 956.3,394.3 965.0,395.4 969.3,403.0 979.1,408.4 993.2,401.9 999.7,411.7 1006.2,426.8 M1096.1,426.8 1101.5,421.4 1113.4,422.5 1118.9,426.8"/>
<path d="M106 283.8H1154M106 497.3H1154" stroke="#fff" stroke-width=".7" opacity=".45"/>
<g font-family="'DejaVu Sans','Noto Sans CJK SC',sans-serif" font-size="8.2" fill="#775680" text-anchor="middle" stroke="#fff" stroke-opacity=".75" stroke-width="1.6" paint-order="stroke" stroke-linejoin="round">
<text x="540.9" y="305.8" textLength="25.3" lengthAdjust="spacing">Ísland</text>
<text x="684.6" y="309.9" textLength="25.7" lengthAdjust="spacing">Norge</text>
<text x="702" y="335.7" textLength="31.1" lengthAdjust="spacing">Sverige</text>
<text x="611.3" y="397.5" textLength="68.9" lengthAdjust="spacing">United Kingdom</text>
<text x="758.2" y="302.2" textLength="31" lengthAdjust="spacing">Suomi /</text>
<text x="758.2" y="311.9" textLength="30.2" lengthAdjust="spacing">Finland</text>
<text x="1072" y="343" textLength="29.7" lengthAdjust="spacing">Россия</text>
<text x="762" y="410.6" textLength="39" lengthAdjust="spacing">Беларусь</text>
<text x="791.5" y="451.3" textLength="33.4" lengthAdjust="spacing">Україна</text>
<text x="745.2" y="467.5" textLength="36.2" lengthAdjust="spacing">România</text>
<text x="798.3" y="512.2" textLength="29.9" lengthAdjust="spacing">Türkiye</text>
<text x="736" y="512.8" textLength="24" lengthAdjust="spacing">Ελλάς</text>
<text x="679.7" y="429.8" textLength="52" lengthAdjust="spacing">Deutschland</text>
<text x="638.9" y="461.4" textLength="27" lengthAdjust="spacing">France</text>
<text x="616.2" y="506.9" textLength="26.6" lengthAdjust="spacing">España</text>
<text x="697.4" y="494" textLength="19.5" lengthAdjust="spacing">Italia</text>
<text x="632.8" y="565.1" textLength="30.1" lengthAdjust="spacing">Algérie</text>
<text x="633" y="574.9" textLength="38" lengthAdjust="spacing">ⵍⵣⵣⴰⵢⴻⵔ</text>
<text x="633" y="584.7" textLength="22.5" lengthAdjust="spacingAndGlyphs">الجزائر</text>
<text x="712.2" y="583.9" textLength="14.6" lengthAdjust="spacingAndGlyphs">ليبيا</text>
<text x="575.4" y="606.7" textLength="46" lengthAdjust="spacing">Mauritanie</text>
<text x="574.8" y="616.7" textLength="30.3" lengthAdjust="spacingAndGlyphs">موريتانيا</text>
<text x="626.5" y="628.6" textLength="17.5" lengthAdjust="spacing">Mali</text>
<text x="676.9" y="628.6" textLength="22.6" lengthAdjust="spacing">Niger</text>
<text x="718" y="639.7" textLength="44" lengthAdjust="spacingAndGlyphs">Tchad تشاد</text>
<text x="667.3" y="670.6" textLength="30.6" lengthAdjust="spacing">Nigeria</text>
<text x="770.4" y="580.8" textLength="16.1" lengthAdjust="spacingAndGlyphs">مصر</text>
<text x="831.5" y="546.7" textLength="21.3" lengthAdjust="spacingAndGlyphs">العراق</text>
<text x="886.7" y="551.9" textLength="16.7" lengthAdjust="spacingAndGlyphs">ایران</text>
<text x="838.8" y="594.8" textLength="29.7" lengthAdjust="spacingAndGlyphs">السعودية</text>
<text x="901" y="613.2" textLength="18.1" lengthAdjust="spacingAndGlyphs">عمان</text>
<text x="853.8" y="639.1" textLength="19.9" lengthAdjust="spacingAndGlyphs">اليمن</text>
<text x="771.2" y="639.7" textLength="29.2" lengthAdjust="spacingAndGlyphs">السودان</text>
<text x="767.7" y="670.6" textLength="53.7" lengthAdjust="spacing">South Sudan</text>
<text x="769.6" y="680.6" textLength="49" lengthAdjust="spacingAndGlyphs">جنوب السودان</text>
<text x="814.8" y="670.4" textLength="25.5" lengthAdjust="spacingAndGlyphs">ኢትዮጵያ</text>
<text x="966.5" y="563.4" textLength="37" lengthAdjust="spacingAndGlyphs">پاکستان</text>
<text x="939.2" y="542.4" textLength="36.4" lengthAdjust="spacingAndGlyphs">افغانستان</text>
<text x="929" y="498" textLength="46" lengthAdjust="spacing">Oʻzbekiston</text>
<text x="909.6" y="512.5" textLength="58" lengthAdjust="spacing">Türkmenistan</text>
<text x="944.2" y="454.7" textLength="43.8" lengthAdjust="spacing">Қазақстан</text>
<text x="1098.8" y="533.1" textLength="16.2" lengthAdjust="spacing">中国</text>
<text x="1130" y="448.2" textLength="33" lengthAdjust="spacing">Монгол</text>
<text x="1130" y="461.6" >улс ᠮᠣᠩᠭᠣᠯ</text>
<text x="1130" y="473.7" >ᠤᠯᠤᠰ</text>
<text x="1005" y="607.7" textLength="19.5" lengthAdjust="spacing">India</text>
<text x="1143" y="638.3" textLength="40" lengthAdjust="spacing">Việt Nam</text>
<text x="1111" y="651.4" textLength="46" lengthAdjust="spacingAndGlyphs">ประเทศไทย</text>
<text x="1078" y="624" >မြန်မာ</text>
</g>
<circle cx="917.3" cy="381.8" r="2.1" fill="#2f7bf6"/>
<circle cx="1061.9" cy="563.4" r="2.1" fill="#2f7bf6"/>
<circle cx="813.6" cy="667.9" r="2.1" fill="#2f7bf6"/>
<circle cx="579.1" cy="679.8" r="2.1" fill="#2f7bf6"/>
<g font-family="'Liberation Sans',sans-serif" font-size="10" fill="#222" text-anchor="middle">
<circle cx="735" cy="294" r="16.6" fill="#b5e28c" fill-opacity=".62"/><circle cx="735" cy="294" r="12.4" fill="#6ecc39" fill-opacity=".7"/>
<text x="735" y="297.9">3</text>
<circle cx="680.6" cy="355.5" r="16.6" fill="#b5e28c" fill-opacity=".62"/><circle cx="680.6" cy="355.5" r="12.4" fill="#6ecc39" fill-opacity=".7"/>
<text x="680.6" y="359.4">51</text>
<circle cx="740" cy="353" r="16.6" fill="#b5e28c" fill-opacity=".62"/><circle cx="740" cy="353" r="12.4" fill="#6ecc39" fill-opacity=".7"/>
<text x="740" y="356.9">104</text>
<circle cx="808.5" cy="391" r="16.6" fill="#b5e28c" fill-opacity=".62"/><circle cx="808.5" cy="391" r="12.4" fill="#6ecc39" fill-opacity=".7"/>
<text x="808.5" y="394.9">177</text>
<circle cx="620.8" cy="420.2" r="16.6" fill="#b5e28c" fill-opacity=".62"/><circle cx="620.8" cy="420.2" r="12.4" fill="#6ecc39" fill-opacity=".7"/>
<text x="620.8" y="424.1">789</text>
<circle cx="670.2" cy="427.4" r="16.6" fill="#b5e28c" fill-opacity=".62"/><circle cx="670.2" cy="427.4" r="12.4" fill="#6ecc39" fill-opacity=".7"/>
<text x="670.2" y="431.3">1,7k</text>
<circle cx="704.8" cy="437.5" r="16.6" fill="#b5e28c" fill-opacity=".62"/><circle cx="704.8" cy="437.5" r="12.4" fill="#6ecc39" fill-opacity=".7"/>
<text x="704.8" y="441.4">319</text>
<circle cx="637.4" cy="445.6" r="16.6" fill="#b5e28c" fill-opacity=".62"/><circle cx="637.4" cy="445.6" r="12.4" fill="#6ecc39" fill-opacity=".7"/>
<text x="637.4" y="449.5">101</text>
<circle cx="769.7" cy="427.9" r="16.6" fill="#b5e28c" fill-opacity=".62"/><circle cx="769.7" cy="427.9" r="12.4" fill="#6ecc39" fill-opacity=".7"/>
<text x="769.7" y="431.8">27</text>
<circle cx="797.2" cy="449.1" r="16.6" fill="#b5e28c" fill-opacity=".62"/><circle cx="797.2" cy="449.1" r="12.4" fill="#6ecc39" fill-opacity=".7"/>
<text x="797.2" y="453.0">9</text>
<circle cx="658.4" cy="476.6" r="16.6" fill="#b5e28c" fill-opacity=".62"/><circle cx="658.4" cy="476.6" r="12.4" fill="#6ecc39" fill-opacity=".7"/>
<text x="658.4" y="480.5">130</text>
<circle cx="747.7" cy="473.9" r="16.6" fill="#b5e28c" fill-opacity=".62"/><circle cx="747.7" cy="473.9" r="12.4" fill="#6ecc39" fill-opacity=".7"/>
<text x="747.7" y="477.8">276</text>
<circle cx="594.8" cy="506" r="16.6" fill="#b5e28c" fill-opacity=".62"/><circle cx="594.8" cy="506" r="12.4" fill="#6ecc39" fill-opacity=".7"/>
<text x="594.8" y="509.9">220</text>
<circle cx="694.7" cy="501.4" r="16.6" fill="#b5e28c" fill-opacity=".62"/><circle cx="694.7" cy="501.4" r="12.4" fill="#6ecc39" fill-opacity=".7"/>
<text x="694.7" y="505.3">54</text>
<circle cx="645" cy="528.3" r="16.6" fill="#b5e28c" fill-opacity=".62"/><circle cx="645" cy="528.3" r="12.4" fill="#6ecc39" fill-opacity=".7"/>
<text x="645" y="532.2">11</text>
<circle cx="838.4" cy="502.3" r="16.6" fill="#b5e28c" fill-opacity=".62"/><circle cx="838.4" cy="502.3" r="12.4" fill="#6ecc39" fill-opacity=".7"/>
<text x="838.4" y="506.2">40</text>
<circle cx="743.1" cy="517.9" r="16.6" fill="#b5e28c" fill-opacity=".62"/><circle cx="743.1" cy="517.9" r="12.4" fill="#6ecc39" fill-opacity=".7"/>
<text x="743.1" y="521.8">7</text>
<circle cx="857.4" cy="534.7" r="16.6" fill="#b5e28c" fill-opacity=".62"/><circle cx="857.4" cy="534.7" r="12.4" fill="#6ecc39" fill-opacity=".7"/>
<text x="857.4" y="538.6">23</text>
<circle cx="783.3" cy="550.5" r="16.6" fill="#b5e28c" fill-opacity=".62"/><circle cx="783.3" cy="550.5" r="12.4" fill="#6ecc39" fill-opacity=".7"/>
<text x="783.3" y="554.4">88</text>
<circle cx="863.5" cy="590.6" r="16.6" fill="#b5e28c" fill-opacity=".62"/><circle cx="863.5" cy="590.6" r="12.4" fill="#6ecc39" fill-opacity=".7"/>
<text x="863.5" y="594.5">48</text>
<circle cx="594.8" cy="546.3" r="16.6" fill="#b5e28c" fill-opacity=".62"/><circle cx="594.8" cy="546.3" r="12.4" fill="#6ecc39" fill-opacity=".7"/>
<text x="594.8" y="550.2">9</text>
<circle cx="552.4" cy="569.1" r="16.6" fill="#b5e28c" fill-opacity=".62"/><circle cx="552.4" cy="569.1" r="12.4" fill="#6ecc39" fill-opacity=".7"/>
<text x="552.4" y="573.0">13</text>
<circle cx="551.3" cy="646.6" r="16.6" fill="#b5e28c" fill-opacity=".62"/><circle cx="551.3" cy="646.6" r="12.4" fill="#6ecc39" fill-opacity=".7"/>
<text x="551.3" y="650.5">4</text>
<circle cx="649.5" cy="680.4" r="16.6" fill="#b5e28c" fill-opacity=".62"/><circle cx="649.5" cy="680.4" r="12.4" fill="#6ecc39" fill-opacity=".7"/>
<text x="649.5" y="684.3">60</text>
<circle cx="328.4" cy="467.5" r="16.6" fill="#b5e28c" fill-opacity=".62"/><circle cx="328.4" cy="467.5" r="12.4" fill="#6ecc39" fill-opacity=".7"/>
<text x="328.4" y="471.4">5</text>
<circle cx="311.8" cy="648.3" r="16.6" fill="#b5e28c" fill-opacity=".62"/><circle cx="311.8" cy="648.3" r="12.4" fill="#6ecc39" fill-opacity=".7"/>
<text x="311.8" y="652.2">14</text>
<circle cx="333.3" cy="660.5" r="16.6" fill="#b5e28c" fill-opacity=".62"/><circle cx="333.3" cy="660.5" r="12.4" fill="#6ecc39" fill-opacity=".7"/>
<text x="333.3" y="664.4">3</text>
<circle cx="1070.5" cy="388.3" r="16.6" fill="#b5e28c" fill-opacity=".62"/><circle cx="1070.5" cy="388.3" r="12.4" fill="#6ecc39" fill-opacity=".7"/>
<text x="1070.5" y="392.2">6</text>
<circle cx="960.7" cy="439.1" r="16.6" fill="#b5e28c" fill-opacity=".62"/><circle cx="960.7" cy="439.1" r="12.4" fill="#6ecc39" fill-opacity=".7"/>
<text x="960.7" y="443.0">2</text>
<circle cx="994.7" cy="483.3" r="16.6" fill="#b5e28c" fill-opacity=".62"/><circle cx="994.7" cy="483.3" r="12.4" fill="#6ecc39" fill-opacity=".7"/>
<text x="994.7" y="487.2">3</text>
<circle cx="954.2" cy="499.1" r="16.6" fill="#b5e28c" fill-opacity=".62"/><circle cx="954.2" cy="499.1" r="12.4" fill="#6ecc39" fill-opacity=".7"/>
<text x="954.2" y="503.0">3</text>
<circle cx="1044.7" cy="478.9" r="16.6" fill="#b5e28c" fill-opacity=".62"/><circle cx="1044.7" cy="478.9" r="12.4" fill="#6ecc39" fill-opacity=".7"/>
<text x="1044.7" y="482.8">2</text>
<circle cx="1136.2" cy="451.4" r="16.6" fill="#b5e28c" fill-opacity=".62"/><circle cx="1136.2" cy="451.4" r="12.4" fill="#6ecc39" fill-opacity=".7"/>
<text x="1136.2" y="455.3">4</text>
<circle cx="981.7" cy="552.2" r="16.6" fill="#b5e28c" fill-opacity=".62"/><circle cx="981.7" cy="552.2" r="12.4" fill="#6ecc39" fill-opacity=".7"/>
<text x="981.7" y="556.1">89</text>
<circle cx="1129.7" cy="569.1" r="16.6" fill="#b5e28c" fill-opacity=".62"/><circle cx="1129.7" cy="569.1" r="12.4" fill="#6ecc39" fill-opacity=".7"/>
<text x="1129.7" y="573.0">8</text>
<circle cx="1026.8" cy="582.2" r="16.6" fill="#b5e28c" fill-opacity=".62"/><circle cx="1026.8" cy="582.2" r="12.4" fill="#6ecc39" fill-opacity=".7"/>
<text x="1026.8" y="586.1">174</text>
<circle cx="988.4" cy="594" r="16.6" fill="#b5e28c" fill-opacity=".62"/><circle cx="988.4" cy="594" r="12.4" fill="#6ecc39" fill-opacity=".7"/>
<text x="988.4" y="597.9">86</text>
<circle cx="972.6" cy="611.6" r="16.6" fill="#b5e28c" fill-opacity=".62"/><circle cx="972.6" cy="611.6" r="12.4" fill="#6ecc39" fill-opacity=".7"/>
<text x="972.6" y="615.5">124</text>
<circle cx="1090.3" cy="621.3" r="16.6" fill="#b5e28c" fill-opacity=".62"/><circle cx="1090.3" cy="621.3" r="12.4" fill="#6ecc39" fill-opacity=".7"/>
<text x="1090.3" y="625.2">5</text>
<circle cx="1000.8" cy="650.4" r="16.6" fill="#b5e28c" fill-opacity=".62"/><circle cx="1000.8" cy="650.4" r="12.4" fill="#6ecc39" fill-opacity=".7"/>
<text x="1000.8" y="654.3">147</text>
<circle cx="1123.8" cy="646.7" r="16.6" fill="#b5e28c" fill-opacity=".62"/><circle cx="1123.8" cy="646.7" r="12.4" fill="#6ecc39" fill-opacity=".7"/>
<text x="1123.8" y="650.6">48</text>
<circle cx="1158" cy="601" r="16.6" fill="#b5e28c" fill-opacity=".62"/><circle cx="1158" cy="601" r="12.4" fill="#6ecc39" fill-opacity=".7"/>
</g>
</svg><div style="position:absolute;right:0;bottom:0;height:14.2px;padding:0 4px 0 4px;background:rgba(255,255,255,.8);font-size:10px;line-height:14.2px;color:#333;white-space:nowrap"><svg width="10" height="7" viewBox="0 0 12 8" style="display:inline-block;margin-right:2px;vertical-align:-0.5px"><path fill="#4C7BE1" d="M0 0h12v4H0z"/><path fill="#FFD500" d="M0 4h12v3H0z"/><path fill="#E0BC00" d="M0 7h12v1H0z"/></svg><span style="color:#0078a8">Leaflet</span> <span>|</span> © <span style="color:#0078a8">OpenStreetMap</span> contributors</div></div>
  </div>
</div>
<div style="position:absolute;left:1196.5px;top:214px;width:10px;height:46px;border-radius:6px;background:#e3e3e3;box-shadow:0 0 4px 1px #e6e6e6"></div>
<div class="pop"><div class="popin">
  <div class="pill"><span class="t" id="t_ws" style="left:0;width:217px;text-align:center;top:14.3px;font-size:12.600px;font-weight:700;color:#5b04b0;letter-spacing:-0.36px">Web Statistics</span></div>
  <div class="act"><div class="wi"></div><div class="bg"></div></div>

  <div class="mi" style="top:59.0px"><svg width="18" height="18" viewBox="0 0 18 18" fill="none" stroke="#5b04b0" stroke-width="1.500"><circle cx="9" cy="9" r="7.200"/><circle cx="9" cy="9" r="4.300"/><circle cx="9" cy="9" r="1.700" fill="#5b04b0" stroke="none"/></svg></div>
  <span class="ml" id="m1" style="top:69.7px;letter-spacing:-0.17px">Overview</span>

  <div class="mi" style="top:110.7px"><svg width="18" height="18" viewBox="0 0 18 18" fill="none" stroke="#5b04b0" stroke-width="1.400"><circle cx="9" cy="9" r="1.800"/><circle cx="9" cy="3.500" r="1.900"/><circle cx="9" cy="14.500" r="1.900"/><circle cx="3.500" cy="9" r="1.900"/><circle cx="14.500" cy="9" r="1.900"/><path d="M9 5.400v1.800M9 10.800v1.800M5.400 9h1.800M10.800 9h1.800"/></svg></div>
  <span class="ml" id="m2" style="top:121.4px;letter-spacing:0.05px">Traffic Structure</span>

  <div class="mi" style="top:162.4px"><svg width="18" height="18" viewBox="0 0 18 18" fill="none" stroke="#5b04b0" stroke-width="1.500" stroke-linecap="round"><circle cx="4" cy="3.600" r="1.800"/><path d="M5.800 3.600h6.400a2.700 2.700 0 0 1 0 5.400H5.800a2.700 2.700 0 0 0 0 5.400h6"/><circle cx="14" cy="14.400" r="2" fill="#5b04b0"/></svg></div>
  <span class="ml" id="m3" style="top:173.1px;letter-spacing:0.02px">Outgoing Traffic</span>
  <div class="od" style="top:174.2px"></div>

  <div class="mi" style="top:214.1px"><svg width="18" height="18" viewBox="0 0 18 18" fill="none" stroke-linecap="round"><path d="M9 3v7" stroke="#5b04b0" stroke-width="2.400"/><circle cx="9" cy="14" r="1.400" fill="#5b04b0"/><path d="M5.400 5.200a5.600 5.600 0 0 0 0 7.600M12.600 5.200a5.600 5.600 0 0 1 0 7.600" stroke="#a77bd8" stroke-width="1.100"/><path d="M3.200 3.600a8.400 8.400 0 0 0 0 10.800M14.800 3.600a8.400 8.400 0 0 1 0 10.800" stroke="#cdb3ea" stroke-width="1"/></svg></div>
  <span class="ml" id="m4" style="top:224.8px;letter-spacing:-0.20px">Conversions</span>
  <div class="od" style="top:225.9px"></div>

  <div class="mi" style="top:265.8px;background:#f8f6fb"><svg width="18" height="18" viewBox="0 0 18 18" fill="none" stroke="#5b04b0" stroke-width="1.500" stroke-linecap="round"><circle cx="9" cy="6.800" r="4.200"/><path d="M5.400 10.200c-1.600 1-1.800 3.200-.4 4.200 1 .800 2.400 1.200 4 1.200s3-.4 4-1.200c1.400-1 1.200-3.200-.4-4.200"/></svg></div>
  <span class="ml" id="m5" style="top:276.5px;letter-spacing:-0.12px">Visitors</span>

  <div class="mi" style="top:317.5px"><svg width="18" height="18" viewBox="0 0 18 18" fill="none" stroke="#5b04b0" stroke-width="1.500" stroke-linecap="round" stroke-linejoin="round"><rect x="2" y="3.400" width="8.600" height="11.200" rx="1.800"/><path d="M13.200 4.400v9.200"/><path d="M15.800 5.600v6.800" stroke-width="1.100"/></svg></div>
  <span class="ml" id="m6" style="top:328.2px;letter-spacing:-0.26px">Landing &amp; Referrer Pages</span>

  <div class="mi" style="top:369.2px"><svg width="18" height="18" viewBox="0 0 18 18" fill="none" stroke="#5b04b0" stroke-width="1.500"><circle cx="9" cy="9" r="7"/><path d="M9 2v14" /><path d="M9.400 4.200a5 5 0 0 1 0 9.600z" fill="#5b04b0" stroke-width=".8"/></svg></div>
  <span class="ml" id="m7" style="top:379.9px;letter-spacing:0.00px">Competition</span>

  <div class="mi" style="top:420.9px"><svg width="18" height="18" viewBox="0 0 18 18" fill="none" stroke="#5b04b0" stroke-width="1.500" stroke-linecap="round" stroke-linejoin="round"><rect x="2.400" y="3" width="13.200" height="9" rx="2"/><path d="M5.600 15h6.800"/></svg></div>
  <span class="ml" id="m8" style="top:431.6px;letter-spacing:-0.30px">Devices</span>

  <div class="mi" style="top:472.6px"><svg width="18" height="18" viewBox="0 0 18 18" fill="none" stroke="#5b04b0" stroke-width="1.400" stroke-linecap="round"><path d="M9.400 2.200A7.200 7.200 0 1 0 16 9.600"/><path d="M9.400 5.200A4.300 4.300 0 1 0 13 9.600"/><path d="M9.200 8.200a1.500 1.500 0 1 0 .800 1.600"/><circle cx="13.400" cy="4.600" r="2.200"/><path d="M11.800 6.200L9.600 8.400"/></svg></div>
  <span class="ml" id="m9" style="top:483.3px;letter-spacing:-0.27px">UTM Campaigns</span>
</div></div>

</body>
</html>
